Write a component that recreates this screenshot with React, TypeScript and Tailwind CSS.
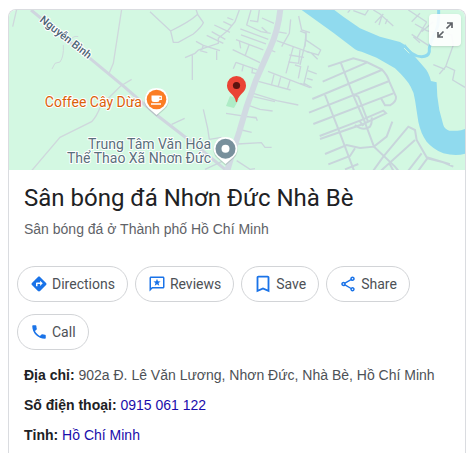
import type { ReactNode } from "react";
import { MdBookmarkBorder, MdDirections, MdOutlineShare, MdPhone } from "react-icons/md";

function ReviewIcon({ className }: { className?: string }) {
  return (
    <svg viewBox="0 0 24 24" fill="currentColor" className={className}>
      <path
        fillRule="evenodd"
        d="M4 2h16c1.100 0 2 .9 2 2v12c0 1.100-.9 2-2 2H6l-4 4V4c0-1.100.9-2 2-2Zm0 2v13.200L5.200 16H20V4Z"
      />
      <path d="m12 5 1.300 3.300 3.500.2-2.700 2.200.9 3.500-3-1.900-3 1.900.9-3.500-2.700-2.200 3.500-.2Z" />
    </svg>
  );
}

const ACTIONS = [
  { label: "Directions", icon: MdDirections, iconClass: "size-[18px]" },
  { label: "Reviews", icon: ReviewIcon, iconClass: "size-[18px]" },
  { label: "Save", icon: MdBookmarkBorder, iconClass: "size-[22px] -mx-[2px]" },
  { label: "Share", icon: MdOutlineShare, iconClass: "size-[18px]" },
  { label: "Call", icon: MdPhone, iconClass: "size-[18px]" },
];

function PlaceMap() {
  return (
    <svg
      viewBox="9 10 456 160"
      preserveAspectRatio="xMidYMid slice"
      className="block h-40 w-full bg-[#d3f8e2]"
      role="img"
      aria-label="Map"
    >
      {/* river and creek */}
      <g transform="translate(300 0) scale(.3333)">
        <path
          d="M-2 24 5 30 100 98 165 148Q172 153 185 155L230 173 285 205Q320 238 332 260 343 278 345 300L355 365Q362 400 380 425 400 448 430 460 470 470 500 460V385Q485 392 472 392H448Q434 388 430 375L418 330Q410 290 410 247L393 243Q385 215 375 205L345 170Q325 138 300 126L240 110 180 85 130 50 95 24Z"
          fill="#90daee"
        />
        <path d="M312 135Q335 170 365 170 385 170 388 155V145Q392 120 408 95 416 75 416 50V28" fill="none" stroke="#90daee" strokeWidth="9" />
        <path d="M312 144 328 160" stroke="#d3f8e2" strokeWidth="3" />
      </g>

      {/* west side lanes */}
      <g transform="scale(.3333)" fill="none" stroke="#cfd8dc" strokeWidth="4">
        <path d="M50 28 38 80M365 28 340 190 328 218M395 238 362 258 302 318Q290 350 275 365L180 412 95 512" />
        <path d="M235 110Q220 106 212 120M190 135Q192 170 180 186L165 190 156 207" strokeWidth="3" />
        <path d="M93 30 270 175 375 262 470 345 590 438 680 512" stroke="#cfd6df" strokeWidth="9" />
      </g>

      {/* centre lanes and the main road */}
      <g transform="translate(150 0) scale(.3333)" fill="none" stroke="#cbd5dc" strokeWidth="4">
        <path d="M0 35 62 93 70 127H85L130 102Q155 80 160 68L143 43 138 28M143 43Q120 65 62 93" />
        <path d="M268 30 255 65 235 90 205 115V130L145 150 135 160 105 173M127 163V240M200 180V152M138 124 160 136 210 152M170 106 220 130M185 95 226 118M193 75 240 97M220 65 245 77M232 53 250 60M150 152 172 158M155 150 160 136" />
        <path d="M303 30 290 75 333 95 362 100M328 30 323 65 300 62M336 54 372 70M271 87 355 118M273 105 348 132M258 119 340 150M297 135 285 168M268 122 272 145M248 149 330 188M258 187 322 210M258 187 250 206M280 195 276 214M308 202 306 218 318 220M352 97 335 82" />
        <path d="M380 122 480 158M422 58 418 100 395 140M446 48 455 90 480 98M380 95 410 100M468 95 465 140M430 140 408 220M450 150 446 190 415 186M418 165 462 172M354 214 480 263M325 244 422 270M372 224 364 257M392 232 384 262M420 242 412 268M435 195 452 200 445 235" />
        <path d="M310 280 380 302 445 315M310 290 375 305M300 318 330 328 368 333M228 340 320 354M285 350 318 352 322 362M275 390 305 397M262 432 334 428 345 442H365M160 328 173 385 178 418M65 373 104 355M178 418 215 412M165 508 215 485M260 482 300 508 315 506M366 152 376 156" />
        <path d="M391 28Q385 90 360 145L318 240 290 320 268 395 250 450 232 512" stroke="#d1dae2" strokeWidth="18" />
      </g>

      {/* east blocks */}
      <g transform="translate(300 0) scale(.3333)" fill="none" stroke="#c8d5db" strokeWidth="4">
        <path d="M0 93 18 100V120L0 195M15 118 62 150 55 165 20 155M33 158 53 178M25 197 12 250 35 263M24 212 50 222M20 235 38 240M0 250 15 255" />
        <path d="M143 38 150 30M160 32 195 45 205 30M220 30 240 42 280 78M250 42 225 68M245 50 237 75M262 58 256 72M325 30 380 66M360 40 335 65M345 72 380 92 415 100M380 66 350 115M335 103 385 136M360 128 340 110M400 65 365 95M410 90 455 105 460 135 437 200 418 222M400 194 435 208M436 198 464 211 458 240 495 262" />
        <g strokeWidth="6">
          <path d="M84 200 160 175 200 186 245 208Q262 225 268 245L288 290Q290 305 270 316H255L243 295M68 245 200 188M37 297 245 210M27 338 268 243M40 372 280 280" />
          <path d="M122 187 158 282 192 360 222 440 285 500 295 512M158 282 175 290 204 365M75 285 118 395 162 512M59 408 180 362 250 332 258 340 190 372 60 417" />
          <path d="M165 375Q190 395 210 380 217 370 215 352M178 362 190 378M75 462 140 435 180 444 222 440 260 410 277 365M85 493 150 468 165 445M135 508 175 492M220 512 250 470 325 380 345 390 350 420 380 472 450 493M243 512 345 420M325 512 365 460M355 512 382 475 430 487 460 500M268 490 280 512" />
        </g>
      </g>

      <path d="M230 96 239 99 234 108 226 106Z" fill="#aeecc6" />

      {/* road name and place labels */}
      <g
        className="font-['Roboto',sans-serif]"
        stroke="#fff"
        strokeWidth="2"
        strokeLinejoin="round"
        paintOrder="stroke"
      >
        <text transform="translate(39 21) rotate(38)" fontSize="11" fontWeight="500" fill="#4d6475">
          Nguyễn Bình
        </text>
        <text x="142" y="107" textAnchor="end" fontSize="14" fill="#da5f0a">
          Coffee Cây Dừa
        </text>
        <text textAnchor="end" fontSize="14" fill="#5a6f7c">
          <tspan x="211" y="149">Trung Tâm Văn Hóa</tspan>
          <tspan x="211" y="163">Thể Thao Xã Nhơn Đức</tspan>
        </text>
      </g>

      {/* coffee pin */}
      <path d="M156.500 88.500a12 12 0 0 0-8 21l8 7 8-7a12 12 0 0 0-8-21Z" fill="#8fa39a" opacity=".4" />
      <path d="M156.500 88a11.500 11.500 0 0 0-8 20l8 7 8-7a11.500 11.500 0 0 0-8-20Z" fill="#fff" />
      <circle cx="156.500" cy="99.500" r="9.800" fill="#fb7d24" />
      <path d="M151.500 95.500h8v4a2.500 2.500 0 0 1-2.500 2.500h-3a2.500 2.500 0 0 1-2.500-2.500ZM151 103.300h10v1.400h-10Z" fill="#fff" />
      <path d="M159 96.300h2.300v3H159" fill="none" stroke="#fff" strokeWidth="1.200" />

      {/* cultural centre pin */}
      <path d="M225.500 137.500a12 12 0 0 0-8 21l8 7 8-7a12 12 0 0 0-8-21Z" fill="#8fa39a" opacity=".4" />
      <path d="M225.500 137a11.500 11.500 0 0 0-8 20l8 7 8-7a11.500 11.500 0 0 0-8-20Z" fill="#fff" />
      <circle cx="225.500" cy="148.700" r="10" fill="#78909c" />
      <circle cx="225.500" cy="148.700" r="4" fill="#fff" />

      {/* selected place */}
      <path d="M236.500 76a9.500 9.500 0 0 0-9.500 9.500c0 4.500 3 7 5.500 9.500 2 2.200 3 4.500 3.300 6.500.2 1 1.200 1 1.400 0 .3-2 1.300-4.300 3.300-6.500 2.500-2.500 5.500-5 5.500-9.500a9.500 9.500 0 0 0-9.500-9.500Z" fill="#ea4335" />
      <circle cx="236.500" cy="85.500" r="3.600" fill="#5b1410" />
    </svg>
  );
}

function Fact({ label, children }: { label: string; children: ReactNode }) {
  return (
    <p>
      <strong className="font-bold text-[#202124]">{label}:</strong> {children}
    </p>
  );
}

export default function App() {
  return (
    <main className="min-h-screen bg-white px-2 pt-[9px] pr-[10px] font-['Liberation_Sans',Arial,sans-serif]">
      <article className="flex min-h-[calc(100vh-9px)] flex-col overflow-hidden rounded-t-lg border border-b-0 border-[#dadce0]">
        <div className="relative">
          <PlaceMap />
          <button
            type="button"
            aria-label="Expand map"
            className="absolute top-1 right-1 flex size-8 items-center justify-center rounded-sm bg-white/90 shadow-sm"
          >
            <svg viewBox="0 0 18 18" className="size-[18px]" fill="none" stroke="#5f6368" strokeWidth="1.700">
              <path d="M11 2h5v5M15.500 2.500l-5 5M7 16H2v-5M2.500 15.500l5-5" />
            </svg>
          </button>
        </div>

        <header className="px-[15px] pt-3">
          <h1 className="font-['Roboto',sans-serif] text-2xl leading-8 text-[#202124]">
            Sân bóng đá Nhơn Đức Nhà Bè
          </h1>
          <p className="mt-1 text-sm leading-[22px] text-[#5f6368]">
            Sân bóng đá ở Thành phố Hồ Chí Minh
          </p>
        </header>

        <div className="mt-[26px] flex flex-wrap gap-x-[7px] gap-y-3 px-2">
          {ACTIONS.map(({ label, icon: Icon, iconClass }) => (
            <button
              key={label}
              type="button"
              className="flex h-9 items-center gap-1 rounded-full border border-[#d2d4d7] px-3 font-['Roboto',sans-serif] text-sm leading-5 text-[#4d5156]"
            >
              <Icon className={`${iconClass} shrink-0 text-[#1a73e8]`} />
              {label}
            </button>
          ))}
        </div>

        <div className="mt-[14px] flex flex-col gap-2 px-[15px] text-sm leading-[22px] text-[#4d5156]">
          <Fact label="Địa chỉ">902a Đ. Lê Văn Lương, Nhơn Đức, Nhà Bè, Hồ Chí Minh</Fact>
          <Fact label="Số điện thoại">
            <a href="tel:0915061122" className="text-[#1a0dab]">0915 061 122</a>
          </Fact>
          <Fact label="Tỉnh">
            <a href="#ho-chi-minh" className="text-[#1a0dab]">Hồ Chí Minh</a>
          </Fact>
        </div>
      </article>
    </main>
  );
}
